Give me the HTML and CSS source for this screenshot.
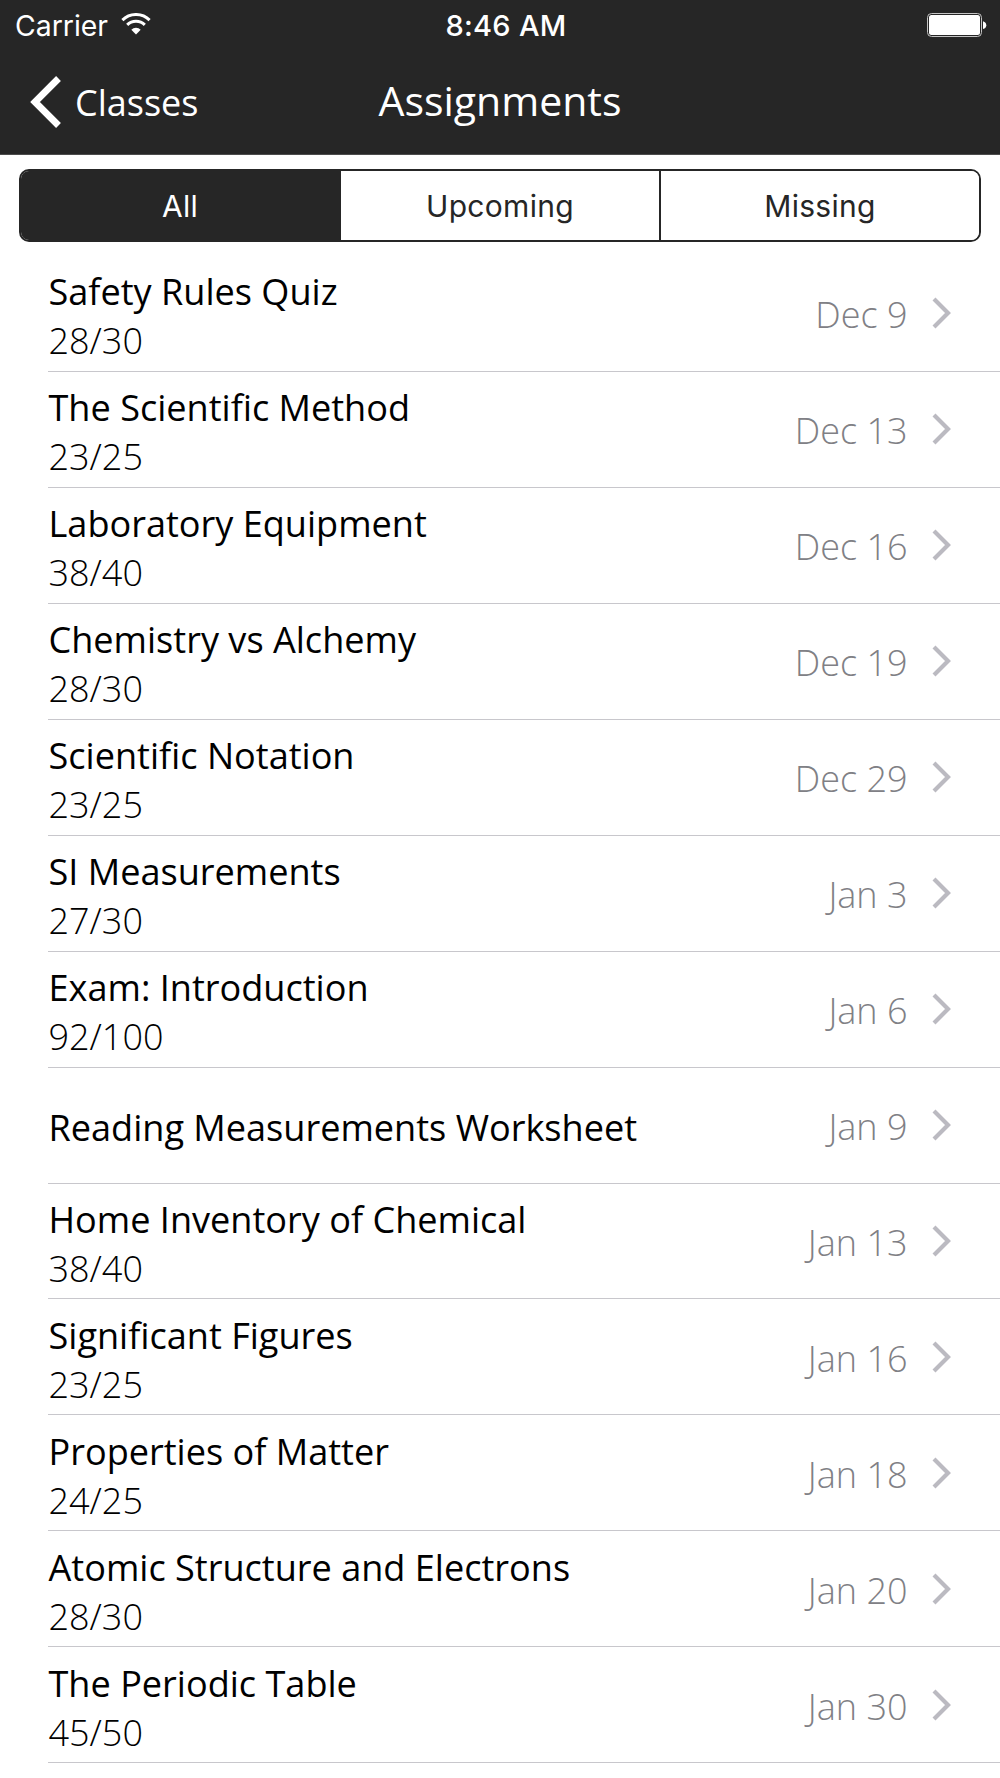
FILE: index.html
```html
<!DOCTYPE html>
<html lang="en">
<head>
    <meta charset="UTF-8">
    <meta name="viewport" content="width=device-width, initial-scale=1.0">
    <title>Assignments</title>
    <link rel="stylesheet" href="styles.css">
</head>
<body>
    <header class="header">
        <!-- Status bar -->
        <div class="status-bar">
            <div class="carrier">
                <span>Carrier</span>
                <svg class="wifi" width="30" height="22" viewBox="0 0 30 22">
                    <path d="M1.4 7.1a19.3 19.3 0 0 1 27.2 0" fill="none" stroke="#fff" stroke-width="3"/>
                    <path d="M6.2 11.9a12.5 12.5 0 0 1 17.6 0" fill="none" stroke="#fff" stroke-width="3"/>
                    <path d="M15 21.6l-4.7-4.9a6.6 6.6 0 0 1 9.4 0z" fill="#fff"/>
                </svg>
            </div>
            <span class="time">8:46 AM</span>
            <svg class="battery" width="60" height="25" viewBox="0 0 60 25">
                <rect x="0.5" y="0.5" width="54" height="23" rx="4" fill="#262626" stroke="#c4c4c4"/>
                <rect x="2" y="2" width="51" height="20" rx="2.5" fill="#fff"/>
                <path d="M56 8.2c4.4 1.2 4.4 6.7 0 7.9z" fill="#fff"/>
            </svg>
        </div>

        <!-- Navigation -->
        <nav class="nav-bar">
            <a class="back" href="#">
                <svg width="32" height="52" viewBox="0 0 32 52">
                    <path d="M28.5 2.5L5 26l23.5 23.5" fill="none" stroke="#fff" stroke-width="6.8"/>
                </svg>
                <span>Classes</span>
            </a>
            <h1 class="title">Assignments</h1>
        </nav>
    </header>

    <div class="tabs">
        <button class="tab active">All</button>
        <button class="tab">Upcoming</button>
        <button class="tab">Missing</button>
    </div>

    <ul class="assignment-list" id="assignmentList"></ul>

    <script src="script.js"></script>
</body>
</html>
```
FILE: styles.css
```css
* {
    box-sizing: border-box;
}
body {
    margin: 0;
    background: white;
    color: #000;
    font-family: 'Open Sans', sans-serif;
    overflow: hidden;
}
.header {
    height: 155px;
    background: #262626;
    border-bottom: 1px solid #4c4c4c;
    color: white;
}
.status-bar {
    display: grid;
    grid-template-columns: 1fr auto 1fr;
    align-items: center;
    height: 50px;
    padding: 0 13px 0 15px;
    font-family: Inter, sans-serif;
    font-size: 29px;
}
.carrier {
    display: flex;
    align-items: center;
    gap: 13px;
    font-size: 28.4px;
}
.wifi {
    margin-bottom: 3px;
}
.time {
    font-weight: 500;
    letter-spacing: 0.3px;
    padding-left: 10px;
}
.battery {
    justify-self: end;
}
.nav-bar {
    display: grid;
    grid-template-columns: 1fr auto 1fr;
    align-items: center;
    height: 104px;
    padding: 0 30px;
}
.back {
    display: flex;
    align-items: center;
    gap: 13px;
    color: white;
    font-size: 36px;
    text-decoration: none;
}
.title {
    margin: 0;
    padding-bottom: 4px;
    font-size: 41px;
    font-weight: 400;
}
.tabs {
    display: flex;
    height: 73px;
    margin: 14px 19px 0;
    border: 2px solid #262626;
    border-radius: 10px;
    overflow: hidden;
}
.tab {
    flex: 1;
    padding: 0;
    border: none;
    background: white;
    color: #262626;
    font-family: Inter, sans-serif;
    font-size: 30px;
    letter-spacing: 0.3px;
}
.tab + .tab {
    border-left: 2px solid #262626;
}
.tab.active {
    background: #262626;
    color: white;
}
.assignment-list {
    margin: 14px 0 0;
    padding: 0 0 0 48px;
    list-style: none;
}
.assignment {
    display: flex;
    align-items: center;
    height: 115.95px;
    padding-right: 48px;
    border-bottom: 1px solid #c8c7cc;
    font-size: 36px;
    line-height: 50px;
}
.info {
    flex: 1;
    padding: 4px 0 0 0.5px;
}
.name {
    font-size: 36.1px;
}
.score {
    margin-bottom: -2px;
    font-weight: 300;
}
.date {
    color: #808085;
    font-weight: 300;
    margin-right: 24.5px;
    padding-top: 4px;
}
```
FILE: script.js
```js
const assignments = [
    { name: "Safety Rules Quiz", score: "28/30", date: "Dec 9" },
    { name: "The Scientific Method", score: "23/25", date: "Dec 13" },
    { name: "Laboratory Equipment", score: "38/40", date: "Dec 16" },
    { name: "Chemistry vs Alchemy", score: "28/30", date: "Dec 19" },
    { name: "Scientific Notation", score: "23/25", date: "Dec 29" },
    { name: "SI Measurements", score: "27/30", date: "Jan 3" },
    { name: "Exam: Introduction", score: "92/100", date: "Jan 6" },
    { name: "Reading Measurements Worksheet", score: "", date: "Jan 9" },
    { name: "Home Inventory of Chemical", score: "38/40", date: "Jan 13" },
    { name: "Significant Figures", score: "23/25", date: "Jan 16" },
    { name: "Properties of Matter", score: "24/25", date: "Jan 18" },
    { name: "Atomic Structure and Electrons", score: "28/30", date: "Jan 20" },
    { name: "The Periodic Table", score: "45/50", date: "Jan 30" }
];

// Ungraded assignments have no score line
document.getElementById("assignmentList").innerHTML = assignments.map(item => `
    <li class="assignment">
        <div class="info">
            <div class="name">${item.name}</div>
            ${item.score ? `<div class="score">${item.score}</div>` : ""}
        </div>
        <span class="date">${item.date}</span>
        <svg class="chevron" width="20" height="32" viewBox="0 0 20 32">
            <path d="M2 2l14 14L2 30" fill="none" stroke="#bbbac1" stroke-width="4.2"/>
        </svg>
    </li>`).join("");
```
